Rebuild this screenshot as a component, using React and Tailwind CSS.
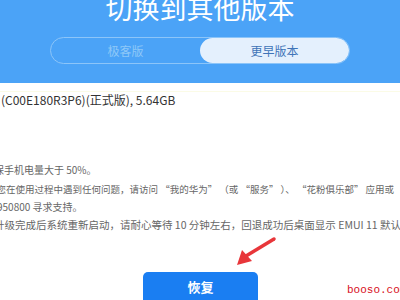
export default function App() {
  const cjk = { fontFamily: '"Noto Sans CJK SC", "Noto Sans", sans-serif' };
  return (
    <div className="relative w-[400px] h-[300px] overflow-hidden bg-white" style={cjk}>
      <div className="h-[83px] bg-[#4ba3f7] flex flex-col items-center">
        <div className="mt-[-10px] text-[27px] leading-[36px] text-white">切换到其他版本</div>
        <div className="mt-[11px] w-[300px] h-[27px] rounded-full border-[1.5px] border-[#8cc5f9] flex overflow-hidden">
          <div className="flex-1 flex items-center justify-center text-[12px] text-[#8ec8f8]">极客版</div>
          <div className="flex-1 flex items-center justify-center text-[12px] text-[#3f74b8] bg-[#e4f0fd] rounded-full">更早版本</div>
        </div>
      </div>
      <div className="h-px bg-[#fbfbe6] mt-[8px]"></div>
      <div className="mt-[-1px] ml-[1px] text-[12px] leading-[18px] text-[#333] whitespace-nowrap">(C00E180R3P6)(正式版), 5.64GB</div>
      <div className="mt-[52px] text-[10px] leading-[18px] text-[#666] whitespace-nowrap">
        <div className="ml-[-16px]">确保手机电量大于 50%。</div>
        <div className="ml-[-13px] mt-px text-[9.5px]">如您在使用过程中遇到任何问题，请访问 “我的华为” （或 “服务” ）、 “花粉俱乐部” 应用或</div>
        <div className="ml-[-3px]">950800 寻求支持。</div>
        <div className="ml-[-6px] text-[10.5px]">升级完成后系统重新启动，请耐心等待 10 分钟左右，回退成功后桌面显示 EMUI 11 默认</div>
      </div>
      <div className="mt-[38px] flex justify-center">
        <div className="ml-[1px] w-[115px] h-[36px] rounded-[5px] bg-[#1a7ef2] flex items-start justify-center pt-[5px] text-[13px] font-bold text-white">恢复</div>
      </div>
      <svg className="absolute left-[232px] top-[234px]" width="46" height="36" viewBox="0 0 46 36">
        <path d="M42 5 L14 22" stroke="#e8363a" strokeWidth="3.5" strokeLinecap="round" />
        <path d="M5 31 L10 16 L20 27 Z" fill="#e8363a" />
      </svg>
      <div className="absolute left-[347px] top-[283px] text-[11px] leading-[14px] text-[#d8101e] whitespace-nowrap" style={{ fontFamily: '"Liberation Mono", monospace' }}>booso.com</div>
    </div>
  );
}
